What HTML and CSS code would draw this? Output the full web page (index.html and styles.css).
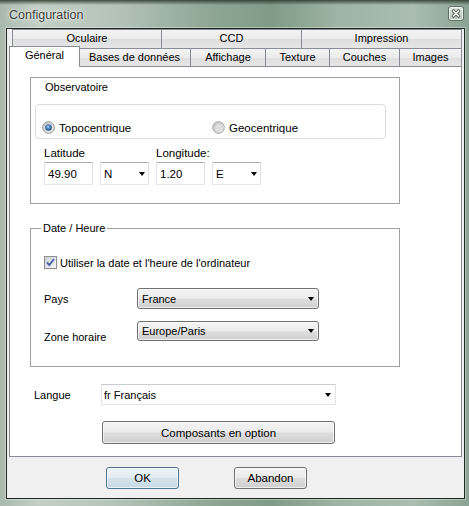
FILE: index.html
```html
<!DOCTYPE html>
<html lang="fr">
<head>
<meta charset="utf-8">
<title>Configuration</title>
<link rel="stylesheet" href="styles.css">
</head>
<body>
<div class="window">
  <div class="titlebar">
    <span class="title">Configuration</span>
    <span class="close">
      <svg width="14" height="13" viewBox="0 0 14 13">
        <path d="M4.5 4 L9.5 9 M9.5 4 L4.5 9" stroke="#4a5a50" stroke-width="3.2" stroke-linecap="round"/>
        <path d="M4.5 4 L9.5 9 M9.5 4 L4.5 9" stroke="#ffffff" stroke-width="1.6" stroke-linecap="round"/>
      </svg>
    </span>
  </div>
  <div class="client">
    <div class="tabrow row1">
      <div class="tab w-ocu">Oculaire</div>
      <div class="tab w-ccd">CCD</div>
      <div class="tab w-imp">Impression</div>
    </div>
    <div class="tabrow row2">
      <div class="tab w-gen sel">Général</div>
      <div class="tab w-bas">Bases de données</div>
      <div class="tab w-aff">Affichage</div>
      <div class="tab w-tex">Texture</div>
      <div class="tab w-cou">Couches</div>
      <div class="tab w-ima">Images</div>
    </div>
    <div class="panel">
      <div class="group obs">
        <div class="obs-label">Observatoire</div>
        <div class="radiobox">
          <label class="radio r1">
            <svg width="13" height="13" viewBox="0 0 13 13">
              <defs>
                <linearGradient id="rb" x1="0" y1="0" x2="1" y2="1">
                  <stop offset="0" stop-color="#c9c9c9"/>
                  <stop offset="1" stop-color="#f6f6f6"/>
                </linearGradient>
                <radialGradient id="dot" cx="0.45" cy="0.4" r="0.6">
                  <stop offset="0" stop-color="#a9d0f2"/>
                  <stop offset="0.55" stop-color="#3f7dbd"/>
                  <stop offset="1" stop-color="#1b3f6b"/>
                </radialGradient>
              </defs>
              <circle cx="6.5" cy="6.5" r="5.8" fill="url(#rb)" stroke="#8b8d8e" stroke-width="1"/>
              <circle cx="6.5" cy="6.5" r="3.3" fill="url(#dot)"/>
            </svg>
            <span>Topocentrique</span>
          </label>
          <label class="radio">
            <svg width="13" height="13" viewBox="0 0 13 13">
              <defs>
                <linearGradient id="rb2" x1="0" y1="0" x2="1" y2="1">
                  <stop offset="0" stop-color="#bdbdbd"/>
                  <stop offset="1" stop-color="#f0f0f0"/>
                </linearGradient>
              </defs>
              <circle cx="6.5" cy="6.5" r="5.8" fill="url(#rb2)" stroke="#a3a5a6" stroke-width="1"/>
              <circle cx="6.5" cy="6.5" r="3.3" fill="#dedede"/>
            </svg>
            <span>Geocentrique</span>
          </label>
        </div>
        <div class="coords">
          <span class="clabel c1">Latitude</span>
          <span class="clabel c3">Longitude:</span>
          <div class="field">49.90</div>
          <div class="field combo">N<i class="arrow"></i></div>
          <div class="field">1.20</div>
          <div class="field combo">E<i class="arrow"></i></div>
        </div>
      </div>

      <div class="group dategrp">
        <div class="legend">Date / Heure</div>
        <label class="check">
          <svg width="13" height="13" viewBox="0 0 13 13">
            <defs>
              <linearGradient id="cb" x1="0" y1="0" x2="1" y2="1">
                <stop offset="0" stop-color="#cbcfd5"/>
                <stop offset="1" stop-color="#f7f7f8"/>
              </linearGradient>
            </defs>
            <rect x="0.5" y="0.5" width="12" height="12" fill="url(#cb)" stroke="#8e8f8f"/>
            <path d="M3 6.3 L5.3 9 L10 3" fill="none" stroke="#4c5fae" stroke-width="1.9"/>
          </svg>
          <span>Utiliser la date et l'heure de l'ordinateur</span>
        </label>
        <div class="formrow pays">
          <span class="flabel">Pays</span>
          <div class="dropbtn">France<i class="arrow"></i></div>
        </div>
        <div class="formrow zone">
          <span class="flabel low">Zone horaire</span>
          <div class="dropbtn">Europe/Paris<i class="arrow"></i></div>
        </div>
      </div>

      <div class="langrow">
        <span class="flabel">Langue</span>
        <div class="langsel">fr Français<i class="arrow"></i></div>
      </div>
      <button class="btn wide" type="button">Composants en option</button>
    </div>
    <div class="footer">
      <button class="btn small default" type="button">OK</button>
      <button class="btn small" type="button">Abandon</button>
    </div>
  </div>
</div>
</body>
</html>
```
FILE: styles.css
```css
* { box-sizing: border-box; }
html, body { margin: 0; padding: 0; }
body {
  width: 469px;
  height: 506px;
  overflow: hidden;
  font-family: "Liberation Sans", Arial, sans-serif;
  font-size: 11px;
  color: #000;
  background: #5d7664;
}

.window {
  width: 469px;
  height: 506px;
  display: flex;
  flex-direction: column;
  padding: 0 4px 7px 6px;
  background:
    linear-gradient(180deg, rgba(40,55,42,0.85) 0px, rgba(40,55,42,0) 5px),
    linear-gradient(90deg, #a9b9ad 0%, #c3cfc6 8%, #b4c3b8 25%, #8ea694 45%, #7f9b87 58%, #9fb4a4 72%, #aabdb0 88%, #8aa393 100%);
}

.titlebar {
  height: 28px;
  flex: none;
  display: flex;
  align-items: center;
  justify-content: space-between;
  padding: 2px 1px 0 3px;
}
.title {
  font-size: 12.5px;
  color: #3b3f3c;
  text-shadow: 0 0 6px rgba(255,255,255,0.9), 0 0 2px rgba(255,255,255,0.9);
}
.close {
  width: 16px;
  height: 15px;
  margin-top: -3px;
  border: 1px solid #5f7065;
  border-radius: 3px;
  box-shadow: inset 0 0 0 1px rgba(255,255,255,0.7);
  background: linear-gradient(180deg, #dfe6e1, #b8c5bc);
  display: flex;
  align-items: center;
  justify-content: center;
}

.client {
  flex: 1;
  display: flex;
  flex-direction: column;
  border: 1px solid #1d2720;
  background: #f0f0f0;
  box-shadow: 0 0 0 1px rgba(255,255,255,0.35);
}

/* tabs */
.tabrow { display: flex; flex: none; }
.row1 { margin-left: 5px; height: 19px; }
.row2 { margin-left: 4px; height: 18px; }
.tab {
  height: 100%;
  border: 1px solid #898c95;
  border-bottom: none;
  background: linear-gradient(180deg, #f3f3f3 0%, #ebebeb 50%, #dedede 50%, #e6e6e6 100%);
  text-align: center;
  line-height: 16px;
  white-space: nowrap;
  margin-left: -1px;
}
.tab:first-child { margin-left: 0; }
.w-ocu { width: 150px; }
.w-ccd { width: 141px; }
.w-imp { width: 161px; }
.w-gen { width: 68px; }
.w-bas { width: 113px; }
.w-aff { width: 76px; }
.w-tex { width: 65px; }
.w-cou { width: 71px; }
.w-ima { width: 63px; }
.tab.sel {
  position: relative;
  z-index: 2;
  width: 71px;
  height: 21px;
  margin: -2px -1px 0 -2px;
  background: #fff;
  line-height: 17px;
}

.panel {
  flex: none;
  margin-left: 2px;
  width: 453px;
  height: 391px;
  border: 1px solid #898c95;
  background: #fff;
  display: flex;
  flex-direction: column;
  align-items: flex-start;
}

.group {
  width: 370px;
  border: 1px solid #a0a0a0;
  margin-left: 20px;
  flex: none;
}
.obs { margin-top: 10px; height: 127px; }
.obs-label { line-height: 13px; margin: 3px 0 0 14px; }

.radiobox {
  margin: 10px 0 0 4px;
  width: 351px;
  height: 35px;
  border: 1px solid #dcdcdc;
  border-radius: 4px;
  display: flex;
  padding: 16px 0 0 6px;
}
.radio {
  display: flex;
  align-items: center;
  gap: 4px;
  height: 13px;
  font-size: 11.5px;
}
.radio.r1 { width: 170px; }

.coords {
  margin: 8px 0 0 13px;
  display: grid;
  grid-template-columns: repeat(4, 49px);
  grid-template-rows: 13px 23px;
  column-gap: 7px;
  row-gap: 2px;
}
.clabel { line-height: 13px; font-size: 11.5px; }
.c1 { grid-column: 1; grid-row: 1; }
.c3 { grid-column: 3; grid-row: 1; }
.field {
  grid-row: 2;
  border: 1px solid;
  border-color: #abadb3 #dbdfe6 #e3e9ef #e2e3ea;
  background: #fff;
  display: flex;
  align-items: center;
  justify-content: space-between;
  padding: 0 3px 0 3px;
  font-size: 11.5px;
}

.arrow {
  display: block;
  width: 0;
  height: 0;
  border-left: 3.5px solid transparent;
  border-right: 3.5px solid transparent;
  border-top: 4px solid #000;
}

.dategrp { margin-top: 24px; height: 139px; }
.legend {
  width: max-content;
  margin: -7px 0 0 10px;
  padding: 0 2px;
  background: #fff;
  line-height: 13px;
}
.check {
  display: flex;
  align-items: center;
  gap: 3px;
  height: 13px;
  margin: 21px 0 0 13px;
}
.formrow {
  display: grid;
  grid-template-columns: 93px 182px;
  margin-left: 13px;
}
.pays { margin-top: 19px; height: 21px; }
.zone { margin-top: 12px; height: 20px; }
.flabel { align-self: center; }
.flabel.low { align-self: end; line-height: 13px; margin-bottom: -3px; }
.dropbtn {
  border: 1px solid #707070;
  border-radius: 3px;
  background: linear-gradient(180deg, #f4f4f4 0%, #ececec 48%, #dedede 52%, #d0d0d0 100%);
  box-shadow: inset 0 0 0 1px rgba(255,255,255,0.6);
  display: flex;
  align-items: center;
  justify-content: space-between;
  padding: 0 4px 0 4px;
}

.langrow {
  margin: 17px 0 0 24px;
  display: grid;
  grid-template-columns: 67px 235px;
  height: 21px;
}
.langsel {
  border: 1px solid;
  border-color: #c9cbd0 #dfe2e8 #e3e6ec #dfe2e8;
  background: #fff;
  display: flex;
  align-items: center;
  justify-content: space-between;
  padding: 0 4px 0 2px;
}

.btn {
  font-family: "Liberation Sans", Arial, sans-serif;
  font-size: 11.5px;
  color: #000;
  border: 1px solid #707070;
  border-radius: 3px;
  background: linear-gradient(180deg, #f3f3f3 0%, #ebebeb 48%, #dddddd 52%, #cfcfcf 100%);
  box-shadow: inset 0 0 0 1px rgba(255,255,255,0.65);
  padding: 0;
  margin: 0;
}
.wide {
  width: 233px;
  height: 23px;
  margin: 16px 0 0 92px;
}

.footer {
  flex: 1;
  display: flex;
  align-items: flex-start;
  gap: 55px;
  padding: 10px 0 0 99px;
}
.small { width: 73px; height: 22px; }
.default {
  border-color: #4f7590;
  background: linear-gradient(180deg, #eef4f8 0%, #e2ecf2 48%, #d3e2ea 52%, #c8dae5 100%);
}
```
